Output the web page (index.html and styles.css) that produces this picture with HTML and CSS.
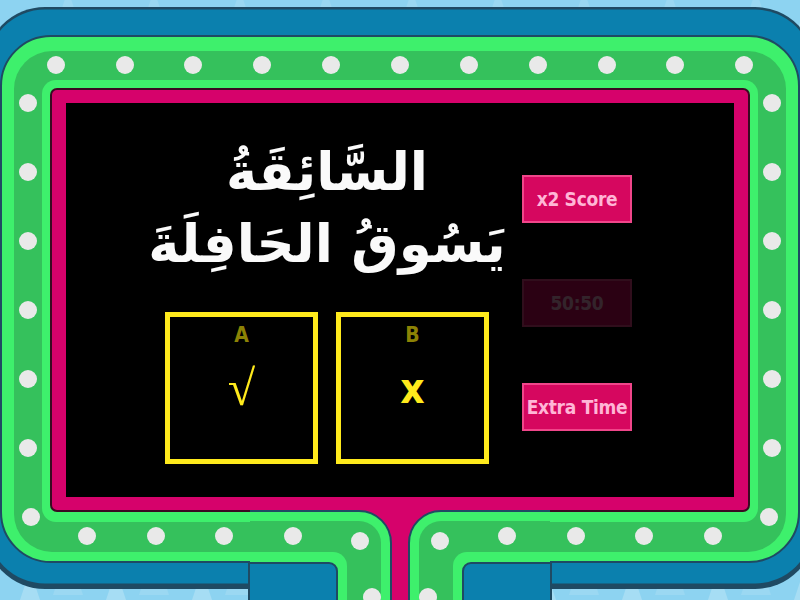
FILE: index.html
```html
<!DOCTYPE html>
<html lang="ar">
<head>
<meta charset="utf-8">
<title>Quiz</title>
<link rel="stylesheet" href="styles.css">
</head>
<body>
<div class="stage">
  <svg class="frame" width="800" height="600" viewBox="0 0 800 600" aria-hidden="true">
    <defs>
      <pattern id="tri" width="86" height="70" patternUnits="userSpaceOnUse">
        <path d="M10 70 L30 10 L50 70 Z" fill="#a6ddf4"/>
        <path d="M53 35 L68 -10 L83 35 Z" fill="#9bd8f2"/>
      </pattern>
      <clipPath id="clipL"><rect x="250" y="500" width="150" height="100"/></clipPath>
      <clipPath id="clipR"><rect x="400" y="500" width="150" height="100"/></clipPath>
    </defs>
    <rect width="800" height="600" fill="#8dd3f1"/>
    <rect width="800" height="600" fill="url(#tri)"/>
    <!-- outer blue band -->
    <rect x="-15" y="7" width="830" height="582" rx="60" fill="#1f4a63"/>
    <rect x="-13" y="9.5" width="826" height="574" rx="58" fill="#0b80ae"/>
    <rect x="248" y="540" width="304" height="70" fill="#1f4a63"/>
    <rect x="250.5" y="540" width="299" height="70" fill="#0b80ae"/>
    <!-- green light frame -->
    <rect x="1" y="36" width="798" height="526" rx="50" fill="#3ef06c" stroke="#1f4a63" stroke-width="2"/>
    <rect x="14" y="51" width="772" height="501" rx="38" fill="#35c15c"/>
    <rect x="42" y="80" width="716" height="442" rx="14" fill="#3ef06c"/>
    <rect x="51" y="89" width="698" height="422" rx="6" fill="#d6026b" stroke="#3a0a22" stroke-width="2"/>
    <!-- stem -->
    <rect x="330" y="505" width="140" height="100" fill="#d6026b"/>
    <g clip-path="url(#clipL)">
      <rect x="-100" y="511" width="491" height="200" rx="32" fill="#3ef06c" stroke="#1f4a63" stroke-width="2"/>
      <rect x="-100" y="521" width="481" height="190" rx="22" fill="#35c15c"/>
      <rect x="-100" y="552" width="447" height="200" rx="14" fill="#3ef06c"/>
      <rect x="-100" y="563" width="437" height="200" rx="8" fill="#0b80ae" stroke="#1f4a63" stroke-width="2"/>
    </g>
    <g clip-path="url(#clipR)">
      <rect x="409" y="511" width="491" height="200" rx="32" fill="#3ef06c" stroke="#1f4a63" stroke-width="2"/>
      <rect x="419" y="521" width="481" height="190" rx="22" fill="#35c15c"/>
      <rect x="453" y="552" width="447" height="200" rx="14" fill="#3ef06c"/>
      <rect x="463" y="563" width="437" height="200" rx="8" fill="#0b80ae" stroke="#1f4a63" stroke-width="2"/>
    </g>
    <!-- lights -->
    <g fill="#e9e9e9">
      <circle cx="56" cy="65" r="9"/><circle cx="125" cy="65" r="9"/><circle cx="193" cy="65" r="9"/>
      <circle cx="262" cy="65" r="9"/><circle cx="331" cy="65" r="9"/><circle cx="400" cy="65" r="9"/>
      <circle cx="469" cy="65" r="9"/><circle cx="538" cy="65" r="9"/><circle cx="607" cy="65" r="9"/>
      <circle cx="675" cy="65" r="9"/><circle cx="744" cy="65" r="9"/>
      <circle cx="28" cy="103" r="9"/><circle cx="28" cy="172" r="9"/><circle cx="28" cy="241" r="9"/>
      <circle cx="28" cy="310" r="9"/><circle cx="28" cy="379" r="9"/><circle cx="28" cy="448" r="9"/>
      <circle cx="31" cy="517" r="9"/>
      <circle cx="772" cy="103" r="9"/><circle cx="772" cy="172" r="9"/><circle cx="772" cy="241" r="9"/>
      <circle cx="772" cy="310" r="9"/><circle cx="772" cy="379" r="9"/><circle cx="772" cy="448" r="9"/>
      <circle cx="769" cy="517" r="9"/>
      <circle cx="87" cy="536" r="9"/><circle cx="156" cy="536" r="9"/><circle cx="224" cy="536" r="9"/>
      <circle cx="293" cy="536" r="9"/><circle cx="360" cy="541" r="9"/><circle cx="372" cy="597" r="9"/>
      <circle cx="713" cy="536" r="9"/><circle cx="644" cy="536" r="9"/><circle cx="576" cy="536" r="9"/>
      <circle cx="507" cy="536" r="9"/><circle cx="440" cy="541" r="9"/><circle cx="428" cy="597" r="9"/>
    </g>
  </svg>

  <main class="screen">
    <section class="board">
      <h1 class="question" dir="rtl"><span class="line">السَّائِقَةُ</span><span class="line">يَسُوقُ الحَافِلَةَ</span></h1>
      <div class="answers">
        <div class="answer">
          <span class="label">A</span>
          <span class="value check">√</span>
        </div>
        <div class="answer">
          <span class="label">B</span>
          <span class="value cross">x</span>
        </div>
      </div>
    </section>
    <aside class="powerups">
      <div class="power">x2 Score</div>
      <div class="power off">50:50</div>
      <div class="power">Extra Time</div>
    </aside>
  </main>
</div>
</body>
</html>
```

FILE: styles.css
```css
html, body {
  margin: 0;
  padding: 0;
  width: 800px;
  height: 600px;
  overflow: hidden;
  background: #8dd3f1;
}

.stage {
  display: grid;
  width: 800px;
  height: 600px;
}

.frame {
  grid-area: 1 / 1;
  display: block;
}

.screen {
  grid-area: 1 / 1;
  margin: 103px 66px;
  height: 394px;
  overflow: hidden;
  background: #000;
  display: grid;
  grid-template-columns: 360px 110px;
  column-gap: 15px;
  padding-left: 81px;
}

.board {
  display: flex;
  flex-direction: column;
  align-items: center;
  padding-top: 33px;
  min-width: 0;
}

.question {
  margin: 0;
  font-family: "DejaVu Sans", sans-serif;
  font-weight: bold;
  font-size: 53px;
  line-height: 72px;
  color: #fafafa;
  text-align: center;
  direction: rtl;
  white-space: nowrap;
}

.line {
  display: block;
}

.answers {
  display: flex;
  gap: 18px;
  margin-top: 32px;
}

.answer {
  width: 153px;
  height: 152px;
  box-sizing: border-box;
  border: 5px solid #ffea1c;
  display: flex;
  flex-direction: column;
  align-items: center;
}

.label {
  margin-top: 6px;
  font-family: "DejaVu Sans Condensed", "DejaVu Sans", sans-serif;
  font-weight: bold;
  font-size: 21px;
  line-height: 24px;
  color: #8c8205;
}

.value {
  flex: 1;
  display: flex;
  align-items: center;
  justify-content: center;
  padding-bottom: 30px;
  color: #ffea1c;
}

.check {
  font-family: "Liberation Serif", serif;
  font-size: 50px;
}

.cross {
  font-family: "DejaVu Sans Condensed", "DejaVu Sans", sans-serif;
  font-weight: bold;
  font-size: 42px;
}

.powerups {
  display: flex;
  flex-direction: column;
  gap: 56px;
  padding-top: 72px;
}

.power {
  height: 48px;
  box-sizing: border-box;
  border: 2px solid #f0468a;
  background: #d6075f;
  color: #ffb6d6;
  font-family: "DejaVu Sans Condensed", "DejaVu Sans", sans-serif;
  font-weight: bold;
  font-size: 19px;
  display: flex;
  align-items: center;
  justify-content: center;
  letter-spacing: -0.3px;
}

.power.off {
  opacity: 0.2;
}
```
